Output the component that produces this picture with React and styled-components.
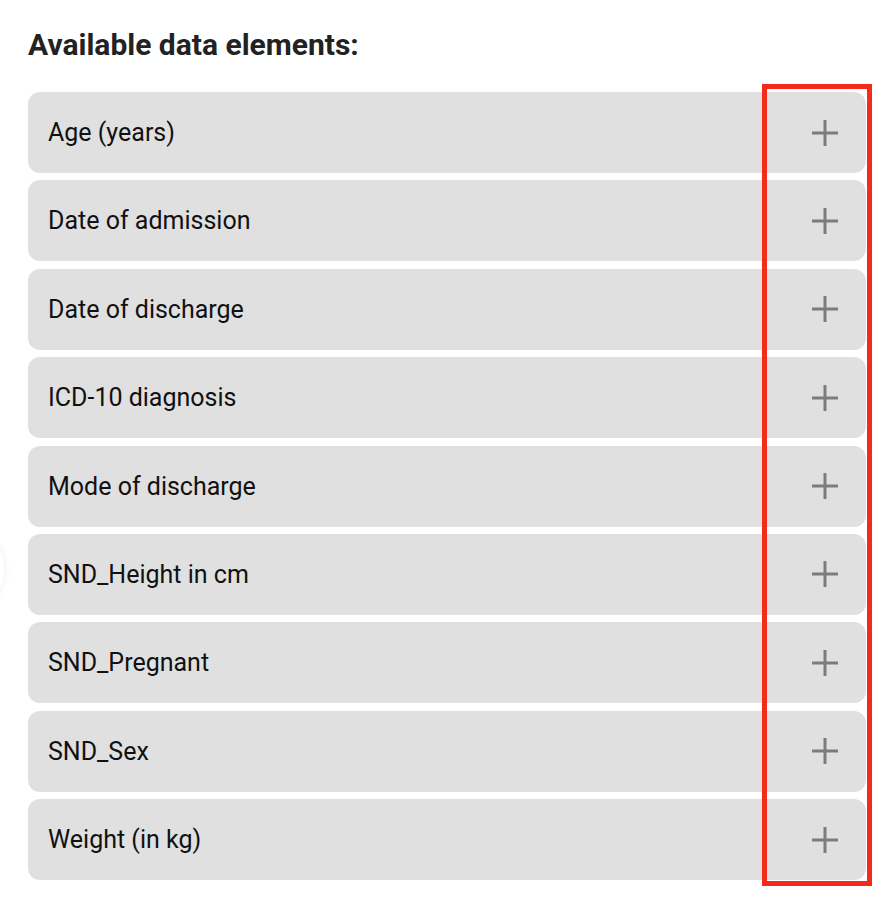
import React from "react";
import styled, { createGlobalStyle } from "styled-components";

const GlobalStyle = createGlobalStyle`
  body {
    margin: 0;
    background: #fff;
    font-family: Roboto, "Liberation Sans", sans-serif;
    overflow: hidden;
  }
`;

const Page = styled.div`
  position: relative;
  width: 894px;
  height: 898px;
  padding: 27px 28px 0 28px;
  box-sizing: border-box;
  overflow: hidden;
`;

const Title = styled.h2`
  margin: 0 0 29px 0;
  font-size: 30px;
  line-height: 36px;
  font-weight: 700;
  color: #222;
`;

const List = styled.div`
  display: flex;
  flex-direction: column;
  gap: 7.4px;
  width: 838px;
`;

const Row = styled.div`
  display: flex;
  align-items: center;
  justify-content: space-between;
  height: 81px;
  padding: 0 26px 0 20px;
  border-radius: 12px;
  background: #e0e0e0;
  box-sizing: border-box;
`;

const Label = styled.span`
  font-size: 25px;
  color: #111;
`;

const AddButton = styled.button`
  display: flex;
  align-items: center;
  justify-content: center;
  width: 30px;
  height: 30px;
  padding: 0;
  border: none;
  background: transparent;
  cursor: pointer;
`;

/* edge of a floating handle that sits just off the left side */
const EdgeHandle = styled.div`
  position: absolute;
  left: -40px;
  top: 538px;
  width: 44px;
  height: 64px;
  border-radius: 50%;
  background: #fff;
  box-shadow: 0 0 8px rgba(0, 0, 0, 0.07);
`;

const Highlight = styled.div`
  position: absolute;
  left: 762px;
  top: 84px;
  width: 110px;
  height: 802px;
  border: 5px solid #f42a1b;
  box-sizing: border-box;
  pointer-events: none;
`;

const items = [
  "Age (years)",
  "Date of admission",
  "Date of discharge",
  "ICD-10 diagnosis",
  "Mode of discharge",
  "SND_Height in cm",
  "SND_Pregnant",
  "SND_Sex",
  "Weight (in kg)",
];

function PlusIcon() {
  return (
    <svg width="26" height="26" viewBox="0 0 26 26">
      <path d="M13 0v26M0 13h26" stroke="#7c7c7c" strokeWidth="3" />
    </svg>
  );
}

export default function App() {
  return (
    <Page>
      <GlobalStyle />
      <Title>Available data elements:</Title>
      <List>
        {items.map((name) => (
          <Row key={name}>
            <Label>{name}</Label>
            <AddButton aria-label={`Add ${name}`}>
              <PlusIcon />
            </AddButton>
          </Row>
        ))}
      </List>
      <EdgeHandle />
      <Highlight />
    </Page>
  );
}
